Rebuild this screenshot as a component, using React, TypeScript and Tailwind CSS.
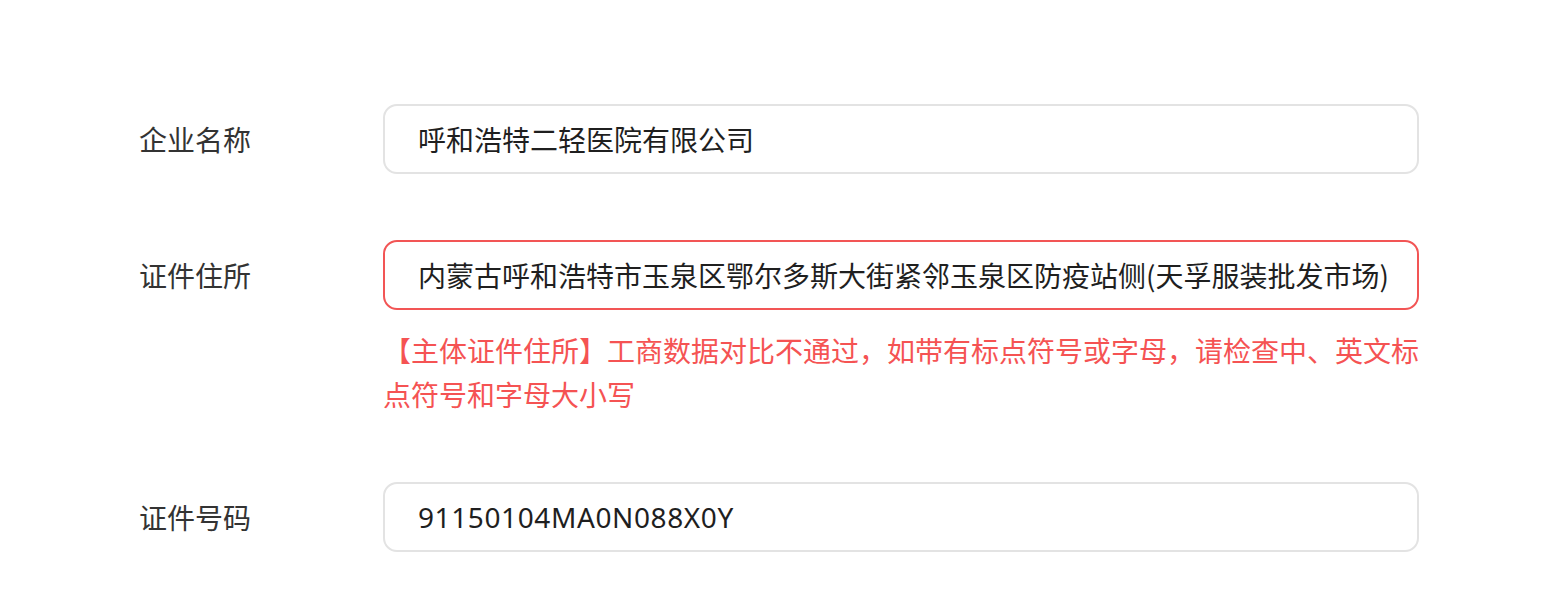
const fields = [
  { label: '企业名称', value: '呼和浩特二轻医院有限公司' },
  {
    label: '证件住所',
    value: '内蒙古呼和浩特市玉泉区鄂尔多斯大街紧邻玉泉区防疫站侧(天孚服装批发市场)',
    error:
      '【主体证件住所】工商数据对比不通过，如带有标点符号或字母，请检查中、英文标点符号和字母大小写',
  },
  { label: '证件号码', value: '91150104MA0N088X0Y', latin: true },
];

export default function App() {
  return (
    <div
      className="min-h-[599px] w-full bg-white pl-[139px] pt-[104px]"
      style={{ fontFamily: '"Noto Sans CJK SC", "Noto Sans", sans-serif' }}
    >
      <div className="flex flex-col gap-[66px]">
        {fields.map((f) => (
          <div key={f.label} className="flex">
            <div className="flex h-[70px] w-[244px] shrink-0 items-center text-[28px] text-[#333333]">
              {f.label}
            </div>
            <div className="w-[1036px]">
              <div
                className={`flex h-[70px] items-center rounded-[14px] border-2 pl-[33px] text-[28px] text-[#1f1f1f] ${
                  f.error ? 'border-[#f25555]' : 'border-[#e3e3e3]'
                }`}
              >
                <span
                  className={`whitespace-nowrap ${
                    f.latin ? "font-['Noto_Sans','Noto_Sans_CJK_SC',sans-serif] tracking-[0.6px]" : ''
                  }`}
                >
                  {f.value}
                </span>
              </div>
              {f.error && (
                <div className="mt-[18px] text-[28px] leading-[44px] text-[#f55353]">{f.error}</div>
              )}
            </div>
          </div>
        ))}
      </div>
    </div>
  );
}
